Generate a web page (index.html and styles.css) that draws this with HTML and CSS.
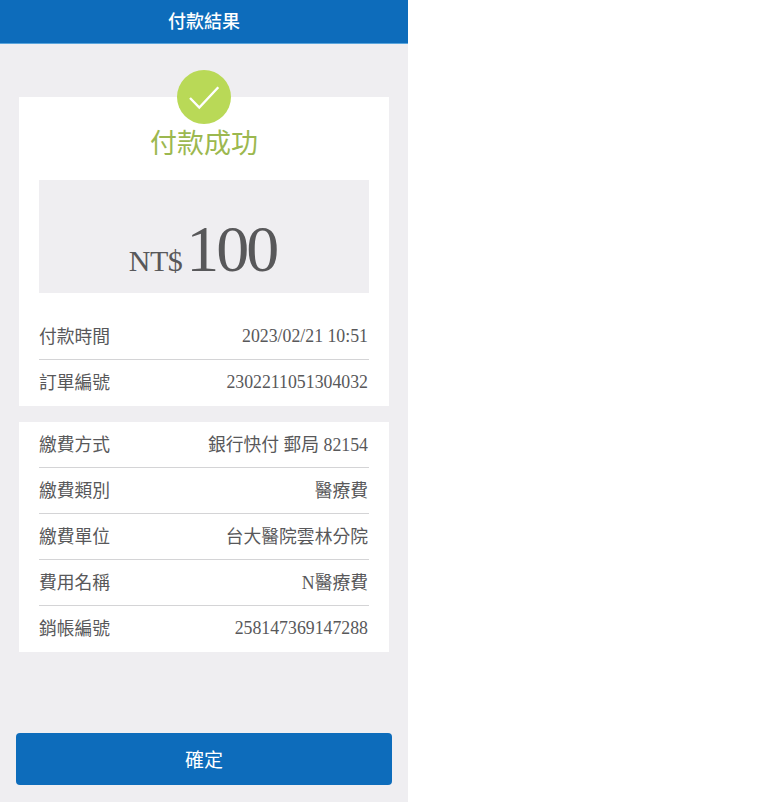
FILE: index.html
```html
<!DOCTYPE html>
<html lang="zh-Hant">
<head>
<meta charset="utf-8">
<title>付款結果</title>
<link rel="stylesheet" href="styles.css">
</head>
<body>
<div class="app">
  <header class="topbar">付款結果</header>
  <main class="content">
    <section class="card card-result">
      <div class="badge">
        <svg viewBox="0 0 54 54" width="54" height="54" aria-hidden="true"><circle cx="27" cy="27" r="27" fill="#b9d957"/><path d="M13 28 L22.3 37.5 L41.3 17.3" fill="none" stroke="#fff" stroke-width="2.4"/></svg>
      </div>
      <h1 class="result-title">付款成功</h1>
      <div class="amount"><span class="currency">NT$</span><span class="value">100</span></div>
      <div class="rows rows-first">
        <div class="row"><span class="label">付款時間</span><span>2023/02/21 10:51</span></div>
        <div class="row"><span class="label">訂單編號</span><span>2302211051304032</span></div>
      </div>
    </section>
    <section class="card">
      <div class="rows">
        <div class="row"><span class="label">繳費方式</span><span class="label">銀行快付 郵局 82154</span></div>
        <div class="row"><span class="label">繳費類別</span><span class="label">醫療費</span></div>
        <div class="row"><span class="label">繳費單位</span><span class="label">台大醫院雲林分院</span></div>
        <div class="row"><span class="label">費用名稱</span><span class="label">N醫療費</span></div>
        <div class="row"><span class="label">銷帳編號</span><span>258147369147288</span></div>
      </div>
    </section>
  </main>
  <div class="actions"><button class="confirm" type="button">確定</button></div>
</div>
</body>
</html>
```
FILE: styles.css
```css
* { box-sizing: border-box; }
html, body { margin: 0; padding: 0; background: #fff; }
body { font-family: "Liberation Serif", "Noto Sans CJK TC", serif; color: #58585a; }
.app { width: 408px; height: 802px; background: #efeef1; display: flex; flex-direction: column; }
.topbar { height: 44px; flex: none; background: #0d6cbb; border-bottom: 1px solid #5aa5dc; color: #fff; font-family: "Noto Sans CJK TC", sans-serif; font-size: 18px; font-weight: 500; line-height: 40px; text-align: center; }
.content { flex: 1; padding: 53px 19px 0 19px; display: flex; flex-direction: column; gap: 16px; }
.card { background: #fff; padding: 0 20px; width: 370px; }
.card-result { position: relative; padding-top: 27px; }
.badge { position: absolute; left: 158px; top: -27px; width: 54px; height: 54px; }
.badge svg { display: block; }
.result-title { margin: 0; height: 56px; font-family: "Noto Sans CJK TC", sans-serif; font-size: 27px; font-weight: 400; line-height: 36px; text-align: center; color: #9cb84f; }
.amount { height: 113px; background: #efeef1; display: flex; justify-content: center; align-items: baseline; gap: 4px; padding: 36px 3px 0 0; line-height: 1; }
.currency { font-size: 30px; letter-spacing: -0.5px; }
.value { font-size: 66px; letter-spacing: -3px; }
.rows-first { margin-top: 21px; }
.row { height: 46px; display: flex; justify-content: space-between; align-items: center; padding-right: 1px; font-size: 17.8px; border-bottom: 1px solid #d4d4d6; }
.row:last-child { border-bottom: 0; padding-bottom: 1px; }
.label { padding-bottom: 3px; }
.actions { flex: none; padding: 0 16px 17px; }
.confirm { display: block; width: 376px; height: 52px; border: 0; border-radius: 4px; background: #0d6cbb; color: #fff; font-family: "Noto Sans CJK TC", sans-serif; font-size: 19px; padding: 0 0 2px; }
```
